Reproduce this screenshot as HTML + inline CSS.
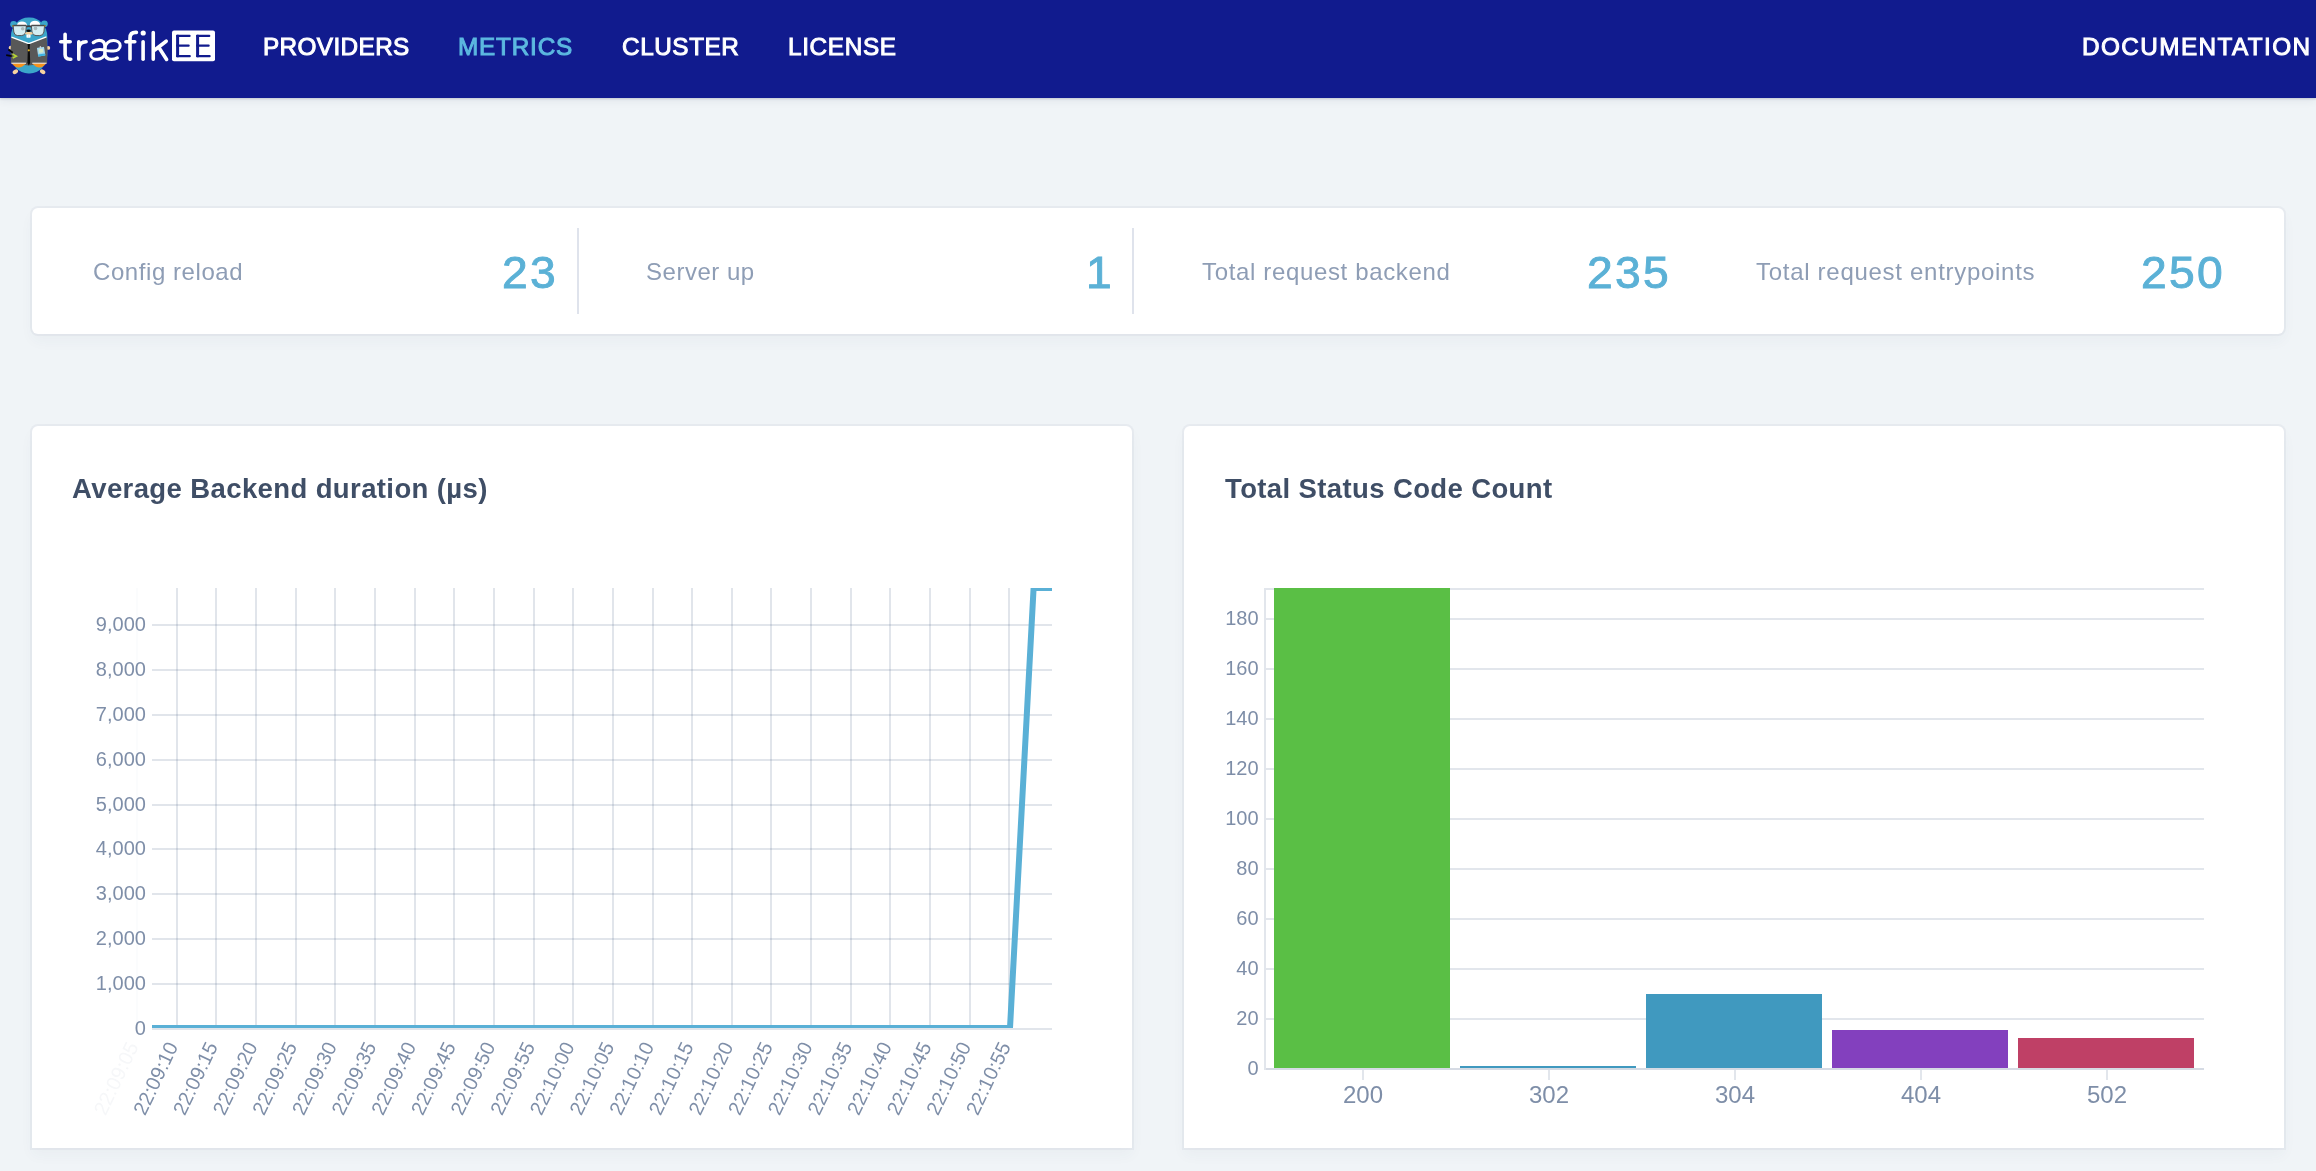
<!DOCTYPE html>
<html lang="en"><head><meta charset="utf-8"><title>Traefik EE - Metrics</title>
<style>
html,body{margin:0;padding:0;}
body{width:2316px;height:1171px;overflow:hidden;position:relative;background:#f0f4f7;font-family:"Liberation Sans", sans-serif;}
.t{position:absolute;white-space:nowrap;line-height:1;margin:0;will-change:transform;}
.nav{position:absolute;left:0;top:0;width:2316px;height:98px;background:#111b8e;box-shadow:0 1px 2px rgba(40,50,80,.18),0 3px 8px rgba(40,50,80,.07);}
.card{position:absolute;background:#fff;border-radius:6px;box-shadow:0 0 0 2px rgba(58,70,105,.047),0 7px 14px rgba(58,70,105,.04);}
.card.sq{border-radius:6px 6px 0 0;}
.div{position:absolute;width:2px;background:#dfe3ec;top:228px;height:86px;}
svg{position:absolute;left:0;top:0;overflow:visible;}
svg text{font-family:"Liberation Sans", sans-serif;}
</style></head><body>

<div class="nav"></div>
<div class="t" style="left:263.0px;top:35.38px;font-size:24.3px;color:#ffffff;font-weight:400;letter-spacing:0.4px;-webkit-text-stroke:1px #ffffff;">PROVIDERS</div>
<div class="t" style="left:458.40000000000003px;top:35.38px;font-size:24.3px;color:#5cb8e0;font-weight:400;letter-spacing:0.81px;-webkit-text-stroke:1px #5cb8e0;">METRICS</div>
<div class="t" style="left:622.2px;top:35.38px;font-size:24.3px;color:#ffffff;font-weight:400;letter-spacing:0.58px;-webkit-text-stroke:1px #ffffff;">CLUSTER</div>
<div class="t" style="left:787.9px;top:35.38px;font-size:24.3px;color:#ffffff;font-weight:400;letter-spacing:0.68px;-webkit-text-stroke:1px #ffffff;">LICENSE</div>
<div class="t" style="left:2081.5px;top:35.38px;font-size:24.3px;color:#ffffff;font-weight:400;letter-spacing:1.42px;-webkit-text-stroke:1px #ffffff;">DOCUMENTATION</div>
<svg width="230" height="98" viewBox="0 0 230 98">
<g>
<!-- gopher -->
<circle cx="13.6" cy="24.3" r="3.4" fill="#3ba6ca"/><circle cx="44.4" cy="23.8" r="3.4" fill="#3ba6ca"/>
<ellipse cx="15.4" cy="71.8" rx="2.9" ry="2.1" fill="#f7d3a1" transform="rotate(-30 15.4 71.8)"/>
<ellipse cx="42.6" cy="71.8" rx="2.9" ry="2.1" fill="#f7d3a1" transform="rotate(30 42.6 71.8)"/>
<rect x="10.9" y="17.6" width="36.4" height="55.9" rx="17.5" ry="19" fill="#3ba6ca"/>
<circle cx="10.6" cy="47.7" r="1.9" fill="#f7d3a1"/><circle cx="48.3" cy="47.9" r="1.9" fill="#f7d3a1"/>
<ellipse cx="22" cy="25" rx="5" ry="3.6" fill="#ffffff"/><ellipse cx="35" cy="24.5" rx="5.1" ry="3.8" fill="#ffffff"/>
<path d="M13.7,25.5 H25.8 Q26.4,25.5 26.3,26.1 L25.7,32 Q25.1,35.6 21.6,35.6 H17.6 Q14.3,35.6 13.8,32 L13.2,26.1 Q13.1,25.5 13.7,25.5Z" fill="#d3edf2" stroke="#555" stroke-width="1"/>
<path d="M31.9,25.5 H44 Q44.6,25.5 44.5,26.1 L43.9,32 Q43.3,35.6 39.8,35.6 H36 Q32.6,35.6 32,32 L31.4,26.1 Q31.3,25.5 31.9,25.5Z" fill="#d3edf2" stroke="#555" stroke-width="1"/>
<path d="M13.4,25.5 H26.2 M31.5,25.5 H44.4" stroke="#4c4c4c" stroke-width="1.5"/>
<circle cx="22.7" cy="28.8" r="1.8" fill="#a9babd"/><circle cx="35.5" cy="28.4" r="1.8" fill="#a9babd"/>
<path d="M26.2,26.6 Q28.8,25.6 31.5,26.6" stroke="#3f3f3f" stroke-width="1.7" fill="none"/>
<path d="M12.2,26 h1.3 M44.3,25.8 h1.3" stroke="#9a6f1e" stroke-width="1.7"/>
<ellipse cx="28.9" cy="33.3" rx="3.8" ry="1.6" fill="#f6cf9b"/>
<ellipse cx="28.6" cy="30.7" rx="2.3" ry="1.2" fill="#0b0b0b"/>
<rect x="26.4" y="34.4" width="4.2" height="3.4" rx="0.7" fill="#fff"/><path d="M28.5,34.8V37.8" stroke="#bfe0ea" stroke-width="0.5"/>
<!-- jacket -->
<path d="M11.2,37 L28.8,44 L46.6,36.7 Q48.2,50 47.1,63.2 L28.8,65.4 L10.9,63.2 Q10.2,50 11.2,37Z" fill="#585858"/>
<path d="M11.5,37.2 L28.8,43.7 L46.4,36.9" fill="none" stroke="#fff" stroke-width="1.3" stroke-linejoin="round"/>
<path d="M27.5,44 L30.1,44 L29.7,47 L30.2,62.8 L28.8,65.5 L27.4,62.8 L27.9,47Z" fill="#0d0d0d"/>
<circle cx="28.8" cy="50.3" r="1.1" fill="#e0b020"/>
<g transform="rotate(-9 41 51.5)"><rect x="37.5" y="47.3" width="7.2" height="8.8" rx="0.7" fill="#a5d8ec"/><rect x="37.5" y="54" width="7.2" height="2.1" fill="#3cb2e0"/><rect x="39" y="49" width="4.2" height="3.6" fill="#d6e9c8"/><rect x="40.4" y="46.3" width="1.4" height="1.4" fill="#eee"/></g>
<path d="M8.4,49.5 L12.8,52.7 M6.2,55.1 L11.8,56.1" stroke="#050505" stroke-width="1.7" stroke-linecap="butt"/>
<path d="M12.5,54 L16.2,56.1 L12.7,57.9" fill="none" stroke="#b6d433" stroke-width="1.7"/>
<path d="M11.4,63.2 Q18.6,71.6 26.2,63.2Z" fill="#f5921e"/><path d="M32,63.2 Q39.5,71.6 46.5,63.2Z" fill="#f5921e"/>
<path d="M11.4,63.2 H26 M32.3,63.2 H46.6" stroke="#fff" stroke-width="0.9"/>
</g>
<!-- traefik wordmark -->
<g fill="none" stroke="#fff" stroke-width="3.6" stroke-linecap="round" stroke-linejoin="round">
<path d="M65.1,34.3 V54.6 Q65.1,59.3 69.8,59.3 H70.8 M60.7,41.7 H70.2"/>
<path d="M78.8,41.8 V59.2 M78.8,48.6 Q79.2,42 86.1,41.8"/>
<g stroke-width="3.3"><path d="M93.3,42.6 Q96,40.4 99,40.4 Q104.9,40.4 104.9,46.5 V53 Q105,59.4 111.5,59.4 Q115,59.4 117.3,57.9"/>
<path stroke-width="3.0" d="M104.9,50 C99.5,49 90.8,49.2 90.7,54.6 C90.7,57.6 93.8,59.3 97.3,59.3 C101.5,59.3 104.9,56.5 104.9,53"/>
<path stroke-width="3.0" d="M104.9,50.4 C108,51 112,51 113.5,50.9 C117.5,50.9 120.2,48.8 120.2,45.75 C120.2,42.8 117.3,40.55 113.4,40.55 C109,40.55 105.6,43.5 104.9,48.5"/></g>
<path d="M130,59.2 V38 Q130,32.4 135.6,32.4 H136.4 M125.9,41.7 H134.8"/>
<path d="M143.1,41.7 V59.2"/>
<path d="M153.25,32.6 V59.2 M166.2,41.2 L154.4,50.2 M158.9,47.5 L166.6,59.4"/>
</g>
<circle cx="143.2" cy="33" r="2.6" fill="#fff"/>
<rect x="172" y="30.6" width="43" height="30.7" rx="2" fill="#fff"/>
<g fill="#111b8e">
<rect x="176.1" y="34.8" width="3" height="22.5" rx="0.8"/><rect x="176.1" y="34.8" width="14.5" height="2.2" rx="1"/><rect x="176.1" y="44.6" width="13.6" height="2.1" rx="1"/><rect x="176.1" y="55.1" width="14.7" height="2.2" rx="1"/>
<rect x="196.1" y="34.8" width="3" height="22.5" rx="0.8"/><rect x="196.1" y="34.8" width="14.2" height="2.2" rx="1"/><rect x="196.1" y="44.6" width="13.6" height="2.1" rx="1"/><rect x="196.1" y="55.1" width="14.6" height="2.2" rx="1"/>
</g>
</svg>

<div class="card" style="left:32px;top:208px;width:2252px;height:126px;"></div>
<div class="div" style="left:577px;"></div><div class="div" style="left:1132px;"></div>
<div class="t" style="left:92.80000000000001px;top:259.68px;font-size:24px;color:#8e9db5;font-weight:400;letter-spacing:0.57px;">Config reload</div>
<div class="t" style="left:646.4px;top:259.68px;font-size:24px;color:#8e9db5;font-weight:400;letter-spacing:0.51px;">Server up</div>
<div class="t" style="left:1202.0px;top:259.68px;font-size:24px;color:#8e9db5;font-weight:400;letter-spacing:0.65px;">Total request backend</div>
<div class="t" style="left:1756.4px;top:259.68px;font-size:24px;color:#8e9db5;font-weight:400;letter-spacing:0.71px;">Total request entrypoints</div>
<div class="t" style="left:502.0px;top:251.05px;font-size:44px;color:#5bb1d6;font-weight:400;letter-spacing:2.2px;-webkit-text-stroke:0.9px #5bb1d6;transform:scaleX(1.05);transform-origin:0 0;">23</div>
<div class="t" style="left:1086.3px;top:251.05px;font-size:44px;color:#5bb1d6;font-weight:400;letter-spacing:2.2px;-webkit-text-stroke:0.9px #5bb1d6;transform:scaleX(1.05);transform-origin:0 0;">1</div>
<div class="t" style="left:1586.6px;top:251.05px;font-size:44px;color:#5bb1d6;font-weight:400;letter-spacing:2.2px;-webkit-text-stroke:0.9px #5bb1d6;transform:scaleX(1.05);transform-origin:0 0;">235</div>
<div class="t" style="left:2140.8px;top:251.05px;font-size:44px;color:#5bb1d6;font-weight:400;letter-spacing:2.2px;-webkit-text-stroke:0.9px #5bb1d6;transform:scaleX(1.05);transform-origin:0 0;">250</div>
<div class="card sq" style="left:32px;top:426px;width:1100px;height:722px;"></div>
<div class="card sq" style="left:1184px;top:426px;width:1100px;height:722px;"></div>
<div class="t" style="left:71.5px;top:474.52px;font-size:27.5px;color:#3f4e66;font-weight:700;letter-spacing:0.39px;">Average Backend duration (µs)</div>
<div class="t" style="left:1224.5px;top:474.52px;font-size:27.5px;color:#3f4e66;font-weight:700;letter-spacing:0.38px;">Total Status Code Count</div>
<svg width="2316" height="1171" viewBox="0 0 2316 1171">
<defs><clipPath id="ca"><rect x="152" y="588" width="900" height="440"/></clipPath></defs>
<rect x="176" y="588" width="2" height="440" fill="rgba(95,118,150,0.19)"/>
<rect x="215" y="588" width="2" height="440" fill="rgba(95,118,150,0.19)"/>
<rect x="255" y="588" width="2" height="440" fill="rgba(95,118,150,0.19)"/>
<rect x="295" y="588" width="2" height="440" fill="rgba(95,118,150,0.19)"/>
<rect x="334" y="588" width="2" height="440" fill="rgba(95,118,150,0.19)"/>
<rect x="374" y="588" width="2" height="440" fill="rgba(95,118,150,0.19)"/>
<rect x="414" y="588" width="2" height="440" fill="rgba(95,118,150,0.19)"/>
<rect x="453" y="588" width="2" height="440" fill="rgba(95,118,150,0.19)"/>
<rect x="493" y="588" width="2" height="440" fill="rgba(95,118,150,0.19)"/>
<rect x="533" y="588" width="2" height="440" fill="rgba(95,118,150,0.19)"/>
<rect x="572" y="588" width="2" height="440" fill="rgba(95,118,150,0.19)"/>
<rect x="612" y="588" width="2" height="440" fill="rgba(95,118,150,0.19)"/>
<rect x="652" y="588" width="2" height="440" fill="rgba(95,118,150,0.19)"/>
<rect x="691" y="588" width="2" height="440" fill="rgba(95,118,150,0.19)"/>
<rect x="731" y="588" width="2" height="440" fill="rgba(95,118,150,0.19)"/>
<rect x="770" y="588" width="2" height="440" fill="rgba(95,118,150,0.19)"/>
<rect x="810" y="588" width="2" height="440" fill="rgba(95,118,150,0.19)"/>
<rect x="850" y="588" width="2" height="440" fill="rgba(95,118,150,0.19)"/>
<rect x="889" y="588" width="2" height="440" fill="rgba(95,118,150,0.19)"/>
<rect x="929" y="588" width="2" height="440" fill="rgba(95,118,150,0.19)"/>
<rect x="969" y="588" width="2" height="440" fill="rgba(95,118,150,0.19)"/>
<rect x="1008" y="588" width="2" height="440" fill="rgba(95,118,150,0.19)"/>
<rect x="136" y="588" width="2" height="440" fill="rgba(95,118,150,0.19)" opacity="0.12"/>
<rect x="152" y="624" width="900" height="2" fill="rgba(95,118,150,0.19)"/>
<text x="145.9" y="631.10" font-size="20" fill="#7e8ea8" text-anchor="end">9,000</text>
<rect x="152" y="669" width="900" height="2" fill="rgba(95,118,150,0.19)"/>
<text x="145.9" y="676.10" font-size="20" fill="#7e8ea8" text-anchor="end">8,000</text>
<rect x="152" y="714" width="900" height="2" fill="rgba(95,118,150,0.19)"/>
<text x="145.9" y="721.10" font-size="20" fill="#7e8ea8" text-anchor="end">7,000</text>
<rect x="152" y="759" width="900" height="2" fill="rgba(95,118,150,0.19)"/>
<text x="145.9" y="766.10" font-size="20" fill="#7e8ea8" text-anchor="end">6,000</text>
<rect x="152" y="804" width="900" height="2" fill="rgba(95,118,150,0.19)"/>
<text x="145.9" y="811.10" font-size="20" fill="#7e8ea8" text-anchor="end">5,000</text>
<rect x="152" y="848" width="900" height="2" fill="rgba(95,118,150,0.19)"/>
<text x="145.9" y="855.10" font-size="20" fill="#7e8ea8" text-anchor="end">4,000</text>
<rect x="152" y="893" width="900" height="2" fill="rgba(95,118,150,0.19)"/>
<text x="145.9" y="900.10" font-size="20" fill="#7e8ea8" text-anchor="end">3,000</text>
<rect x="152" y="938" width="900" height="2" fill="rgba(95,118,150,0.19)"/>
<text x="145.9" y="945.10" font-size="20" fill="#7e8ea8" text-anchor="end">2,000</text>
<rect x="152" y="983" width="900" height="2" fill="rgba(95,118,150,0.19)"/>
<text x="145.9" y="990.10" font-size="20" fill="#7e8ea8" text-anchor="end">1,000</text>
<rect x="152" y="1028" width="900" height="2" fill="rgba(95,118,150,0.19)"/>
<text x="145.9" y="1035.10" font-size="20" fill="#7e8ea8" text-anchor="end">0</text>
<polyline clip-path="url(#ca)" points="140,1028 1010,1028 1033.6,588 1060,588" transform="translate(0,0)" fill="none" stroke="#5ab0d6" stroke-width="6" stroke-linejoin="miter"/>
<text transform="translate(132.65,1043.2) rotate(-64.5)" x="0" y="7" font-size="20" fill="#7e8ea8" text-anchor="end" opacity="0.07">22:09:05</text>
<text transform="translate(172.30,1043.2) rotate(-64.5)" x="0" y="7" font-size="20" fill="#7e8ea8" text-anchor="end">22:09:10</text>
<text transform="translate(211.95,1043.2) rotate(-64.5)" x="0" y="7" font-size="20" fill="#7e8ea8" text-anchor="end">22:09:15</text>
<text transform="translate(251.60,1043.2) rotate(-64.5)" x="0" y="7" font-size="20" fill="#7e8ea8" text-anchor="end">22:09:20</text>
<text transform="translate(291.25,1043.2) rotate(-64.5)" x="0" y="7" font-size="20" fill="#7e8ea8" text-anchor="end">22:09:25</text>
<text transform="translate(330.90,1043.2) rotate(-64.5)" x="0" y="7" font-size="20" fill="#7e8ea8" text-anchor="end">22:09:30</text>
<text transform="translate(370.55,1043.2) rotate(-64.5)" x="0" y="7" font-size="20" fill="#7e8ea8" text-anchor="end">22:09:35</text>
<text transform="translate(410.20,1043.2) rotate(-64.5)" x="0" y="7" font-size="20" fill="#7e8ea8" text-anchor="end">22:09:40</text>
<text transform="translate(449.85,1043.2) rotate(-64.5)" x="0" y="7" font-size="20" fill="#7e8ea8" text-anchor="end">22:09:45</text>
<text transform="translate(489.50,1043.2) rotate(-64.5)" x="0" y="7" font-size="20" fill="#7e8ea8" text-anchor="end">22:09:50</text>
<text transform="translate(529.15,1043.2) rotate(-64.5)" x="0" y="7" font-size="20" fill="#7e8ea8" text-anchor="end">22:09:55</text>
<text transform="translate(568.80,1043.2) rotate(-64.5)" x="0" y="7" font-size="20" fill="#7e8ea8" text-anchor="end">22:10:00</text>
<text transform="translate(608.45,1043.2) rotate(-64.5)" x="0" y="7" font-size="20" fill="#7e8ea8" text-anchor="end">22:10:05</text>
<text transform="translate(648.10,1043.2) rotate(-64.5)" x="0" y="7" font-size="20" fill="#7e8ea8" text-anchor="end">22:10:10</text>
<text transform="translate(687.75,1043.2) rotate(-64.5)" x="0" y="7" font-size="20" fill="#7e8ea8" text-anchor="end">22:10:15</text>
<text transform="translate(727.40,1043.2) rotate(-64.5)" x="0" y="7" font-size="20" fill="#7e8ea8" text-anchor="end">22:10:20</text>
<text transform="translate(767.05,1043.2) rotate(-64.5)" x="0" y="7" font-size="20" fill="#7e8ea8" text-anchor="end">22:10:25</text>
<text transform="translate(806.70,1043.2) rotate(-64.5)" x="0" y="7" font-size="20" fill="#7e8ea8" text-anchor="end">22:10:30</text>
<text transform="translate(846.35,1043.2) rotate(-64.5)" x="0" y="7" font-size="20" fill="#7e8ea8" text-anchor="end">22:10:35</text>
<text transform="translate(886.00,1043.2) rotate(-64.5)" x="0" y="7" font-size="20" fill="#7e8ea8" text-anchor="end">22:10:40</text>
<text transform="translate(925.65,1043.2) rotate(-64.5)" x="0" y="7" font-size="20" fill="#7e8ea8" text-anchor="end">22:10:45</text>
<text transform="translate(965.30,1043.2) rotate(-64.5)" x="0" y="7" font-size="20" fill="#7e8ea8" text-anchor="end">22:10:50</text>
<text transform="translate(1004.95,1043.2) rotate(-64.5)" x="0" y="7" font-size="20" fill="#7e8ea8" text-anchor="end">22:10:55</text>
<rect x="1266" y="618" width="938" height="2" fill="#e2e6ec"/>
<rect x="1264" y="618" width="2" height="2" fill="#e2e6ec"/>
<text x="1258.6" y="625.10" font-size="20" fill="#7e8ea8" text-anchor="end">180</text>
<rect x="1266" y="668" width="938" height="2" fill="#e2e6ec"/>
<rect x="1264" y="668" width="2" height="2" fill="#e2e6ec"/>
<text x="1258.6" y="675.10" font-size="20" fill="#7e8ea8" text-anchor="end">160</text>
<rect x="1266" y="718" width="938" height="2" fill="#e2e6ec"/>
<rect x="1264" y="718" width="2" height="2" fill="#e2e6ec"/>
<text x="1258.6" y="725.10" font-size="20" fill="#7e8ea8" text-anchor="end">140</text>
<rect x="1266" y="768" width="938" height="2" fill="#e2e6ec"/>
<rect x="1264" y="768" width="2" height="2" fill="#e2e6ec"/>
<text x="1258.6" y="775.10" font-size="20" fill="#7e8ea8" text-anchor="end">120</text>
<rect x="1266" y="818" width="938" height="2" fill="#e2e6ec"/>
<rect x="1264" y="818" width="2" height="2" fill="#e2e6ec"/>
<text x="1258.6" y="825.10" font-size="20" fill="#7e8ea8" text-anchor="end">100</text>
<rect x="1266" y="868" width="938" height="2" fill="#e2e6ec"/>
<rect x="1264" y="868" width="2" height="2" fill="#e2e6ec"/>
<text x="1258.6" y="875.10" font-size="20" fill="#7e8ea8" text-anchor="end">80</text>
<rect x="1266" y="918" width="938" height="2" fill="#e2e6ec"/>
<rect x="1264" y="918" width="2" height="2" fill="#e2e6ec"/>
<text x="1258.6" y="925.10" font-size="20" fill="#7e8ea8" text-anchor="end">60</text>
<rect x="1266" y="968" width="938" height="2" fill="#e2e6ec"/>
<rect x="1264" y="968" width="2" height="2" fill="#e2e6ec"/>
<text x="1258.6" y="975.10" font-size="20" fill="#7e8ea8" text-anchor="end">40</text>
<rect x="1266" y="1018" width="938" height="2" fill="#e2e6ec"/>
<rect x="1264" y="1018" width="2" height="2" fill="#e2e6ec"/>
<text x="1258.6" y="1025.10" font-size="20" fill="#7e8ea8" text-anchor="end">20</text>
<rect x="1264" y="1068" width="940" height="2" fill="#d6dbe4"/>
<text x="1258.6" y="1075.10" font-size="20" fill="#7e8ea8" text-anchor="end">0</text>
<rect x="1266" y="588" width="938" height="2" fill="#e2e6ec"/>
<rect x="1264" y="588" width="2" height="482" fill="#e2e6ec"/>
<rect x="1274" y="588" width="176" height="480" fill="#5abf45"/>
<rect x="1362.0" y="1070" width="2" height="10" fill="#e2e6ec"/>
<text x="1363.0" y="1103.2" font-size="24" fill="#7e8ea8" text-anchor="middle">200</text>
<rect x="1460" y="1066" width="176" height="2" fill="#4099bf"/>
<rect x="1548.0" y="1070" width="2" height="10" fill="#e2e6ec"/>
<text x="1549.0" y="1103.2" font-size="24" fill="#7e8ea8" text-anchor="middle">302</text>
<rect x="1646" y="994" width="176" height="74" fill="#4099bf"/>
<rect x="1734.0" y="1070" width="2" height="10" fill="#e2e6ec"/>
<text x="1735.0" y="1103.2" font-size="24" fill="#7e8ea8" text-anchor="middle">304</text>
<rect x="1832" y="1030" width="176" height="38" fill="#8340be"/>
<rect x="1920.0" y="1070" width="2" height="10" fill="#e2e6ec"/>
<text x="1921.0" y="1103.2" font-size="24" fill="#7e8ea8" text-anchor="middle">404</text>
<rect x="2018" y="1038" width="176" height="30" fill="#bf4066"/>
<rect x="2106.0" y="1070" width="2" height="10" fill="#e2e6ec"/>
<text x="2107.0" y="1103.2" font-size="24" fill="#7e8ea8" text-anchor="middle">502</text>
</svg>
</body></html>
